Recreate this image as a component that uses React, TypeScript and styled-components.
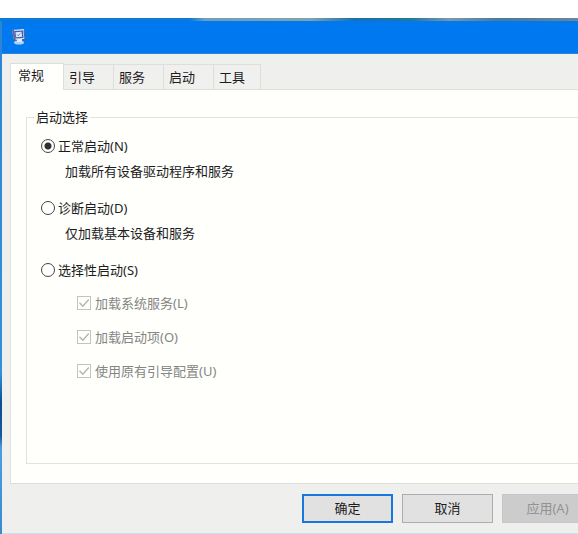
import React, { useState } from "react";
import styled, { createGlobalStyle } from "styled-components";

const GlobalStyle = createGlobalStyle`
  * { box-sizing: border-box; }
  body {
    margin: 0;
    background: #ffffff;
    color: #1c1c1c;
    font: 13px/20px "Noto Sans", "Noto Sans CJK SC", sans-serif;
  }
  button, input { font: inherit; color: inherit; margin: 0; }
`;

const Page = styled.div`
  min-height: 100vh;
  padding-top: 18px;
  display: flex;
  flex-direction: column;
  overflow: hidden;
`;

const Desktop = styled.div`
  flex: 1;
  display: flex;
  flex-direction: column;
  padding: 3px 0 1px 2px;
  background:
    linear-gradient(90deg, #0c7bd8 0, #0c7bd8 190px, #6f9fb9 205px, #7fa3ae 310px, #1b6fae 355px, #23779f 410px, #7b97a8 450px, #477a9c 500px, #708695 100%) top / 100% 3px no-repeat,
    linear-gradient(180deg, #2c84d4 0, #3291dc 355px, #0b4d8f 385px, #15599c 418px, #4b9fe0 430px, #3b88cf 100%) left / 2px 100% no-repeat,
    #c3e3f3;
`;

/* The dialog runs on past the right edge of the visible desktop. */
const Dialog = styled.main`
  flex: 1;
  margin-right: -40px;
  display: flex;
  flex-direction: column;
  background: #eff0ed;
`;

const TitleBar = styled.header`
  height: 33px;
  padding: 0 8px;
  display: flex;
  align-items: center;
  background: #0078ef;
  border-bottom: 1px solid #2b83d8;
`;

const Body = styled.div`
  flex: 1;
  display: flex;
  flex-direction: column;
  padding: 9px 8px 0;
`;

const TabList = styled.div`
  display: flex;
  align-items: flex-end;
`;

const Tab = styled.button<{ $active: boolean }>`
  position: relative;
  width: ${(p) => (p.$active ? 54 : 50)}px;
  height: ${(p) => (p.$active ? 27 : 25)}px;
  margin-bottom: ${(p) => (p.$active ? -1 : 0)}px;
  padding: ${(p) => (p.$active ? "0 0 4px 7px" : "0 0 0 5px")};
  text-align: left;
  border: 1px solid #dededc;
  border-left-width: ${(p) => (p.$active ? 1 : 0)}px;
  border-bottom: 0;
  background: ${(p) => (p.$active ? "#fffffc" : "#f0f0ee")};
  &:last-child { width: 47px; }
`;

const TabPanel = styled.section`
  flex: 1;
  display: flex;
  padding: 17px 16px 19px 15px;
  background: #fffffc;
  border: 1px solid #dededb;
`;

const Group = styled.fieldset`
  flex: 1;
  min-width: 0;
  margin: 0;
  padding: 9px 14px 0;
  border: 1px solid #e2e2df;
`;

const Legend = styled.legend`
  margin-left: -7px;
  padding: 0 2px;
`;

const Choice = styled.div`
  margin-bottom: 17px;
`;

const OptionLabel = styled.label<{ $muted?: boolean }>`
  display: flex;
  align-items: center;
  gap: ${(p) => (p.$muted ? 4 : 3)}px;
  color: ${(p) => (p.$muted ? "#858585" : "inherit")};
`;

const Radio = styled.input`
  appearance: none;
  width: 14px;
  height: 14px;
  border: 1px solid #444444;
  border-radius: 50%;
  background: #ffffff;
  &:checked {
    background: radial-gradient(circle, #303030 0, #303030 3px, #ffffff 4px);
  }
`;

const Description = styled.p`
  margin: 5px 0 0 24px;
`;

const Services = styled.div`
  display: grid;
  gap: 14px;
  margin: 13px 0 0 36px;
`;

const CheckSlot = styled.span`
  position: relative;
  display: flex;
`;

const Checkbox = styled.input`
  appearance: none;
  width: 14px;
  height: 14px;
  border: 1px solid #c3c3c1;
  background: #fffffc;
  & + svg { visibility: hidden; }
  &:checked + svg { visibility: visible; }
`;

const Tick = styled.svg`
  position: absolute;
  inset: 0;
  pointer-events: none;
`;

const Footer = styled.footer`
  display: flex;
  justify-content: flex-end;
  gap: 9px;
  padding: 10px 17px 10px 0;
`;

const PushButton = styled.button<{ $primary?: boolean }>`
  width: 91px;
  height: 29px;
  padding: 0 0 2px;
  background: #e1e1e1;
  border: ${(p) => (p.$primary ? "2px solid #1678dc" : "1px solid #adadad")};
  &:disabled {
    background: #cccccc;
    border-color: #c6c6c6;
    color: #929292;
  }
`;

const tabs = ["常规", "引导", "服务", "启动", "工具"];

const modes = [
  { id: "normal", label: "正常启动(N)", note: "加载所有设备驱动程序和服务" },
  { id: "diagnostic", label: "诊断启动(D)", note: "仅加载基本设备和服务" },
  { id: "selective", label: "选择性启动(S)" },
];

const services = ["加载系统服务(L)", "加载启动项(O)", "使用原有引导配置(U)"];

function ComputerIcon() {
  return (
    <svg width="18" height="18" viewBox="0 0 18 18" aria-hidden="true">
      <ellipse cx="9" cy="14.5" rx="5" ry="2" fill="#a9d5ef" />
      <path d="M7 11h5v3H7z" fill="#e6e9f1" />
      <path d="M2 2l12-1 1 10-11 1z" fill="#e3e1ef" />
      <path d="M2 2l2 10 2 1-2-11z" fill="#765f86" />
      <path d="M4 3l9-.5.5 7.5-8 .5z" fill="#3264bd" />
      <path d="M5.5 4.2l6-.4.6 5-6 .5z" fill="#dceaff" />
      <path d="M7 6.5l1 1.2 2.5-2.4" fill="none" stroke="#6f86bd" strokeWidth="1" />
      <path d="M14 2l1 9-3 1" fill="none" stroke="#59558e" />
    </svg>
  );
}

export default function App() {
  const [tab, setTab] = useState(0);
  const [mode, setMode] = useState("normal");

  return (
    <Page>
      <GlobalStyle />
      <Desktop>
        <Dialog>
          <TitleBar>
            <ComputerIcon />
          </TitleBar>
          <Body>
            <TabList role="tablist">
              {tabs.map((name, i) => (
                <Tab key={name} role="tab" aria-selected={tab === i} $active={tab === i} onClick={() => setTab(i)}>
                  {name}
                </Tab>
              ))}
            </TabList>
            <TabPanel role="tabpanel">
              <Group>
                <Legend>启动选择</Legend>
                {modes.map((m) => (
                  <Choice key={m.id}>
                    <OptionLabel>
                      <Radio type="radio" name="mode" checked={mode === m.id} onChange={() => setMode(m.id)} />
                      {m.label}
                    </OptionLabel>
                    {m.note && <Description>{m.note}</Description>}
                    {m.id === "selective" && (
                      <Services>
                        {services.map((s) => (
                          <OptionLabel key={s} $muted>
                            <CheckSlot>
                              <Checkbox type="checkbox" defaultChecked disabled />
                              <Tick width="14" height="14" viewBox="0 0 14 14" aria-hidden="true">
                                <path d="M2.5 6.8l3.3 3.4L11.8 3.5" fill="none" stroke="#b2b2b0" strokeWidth="1.3" />
                              </Tick>
                            </CheckSlot>
                            {s}
                          </OptionLabel>
                        ))}
                      </Services>
                    )}
                  </Choice>
                ))}
              </Group>
            </TabPanel>
            <Footer>
              <PushButton $primary>确定</PushButton>
              <PushButton>取消</PushButton>
              <PushButton disabled>应用(A)</PushButton>
            </Footer>
          </Body>
        </Dialog>
      </Desktop>
    </Page>
  );
}
